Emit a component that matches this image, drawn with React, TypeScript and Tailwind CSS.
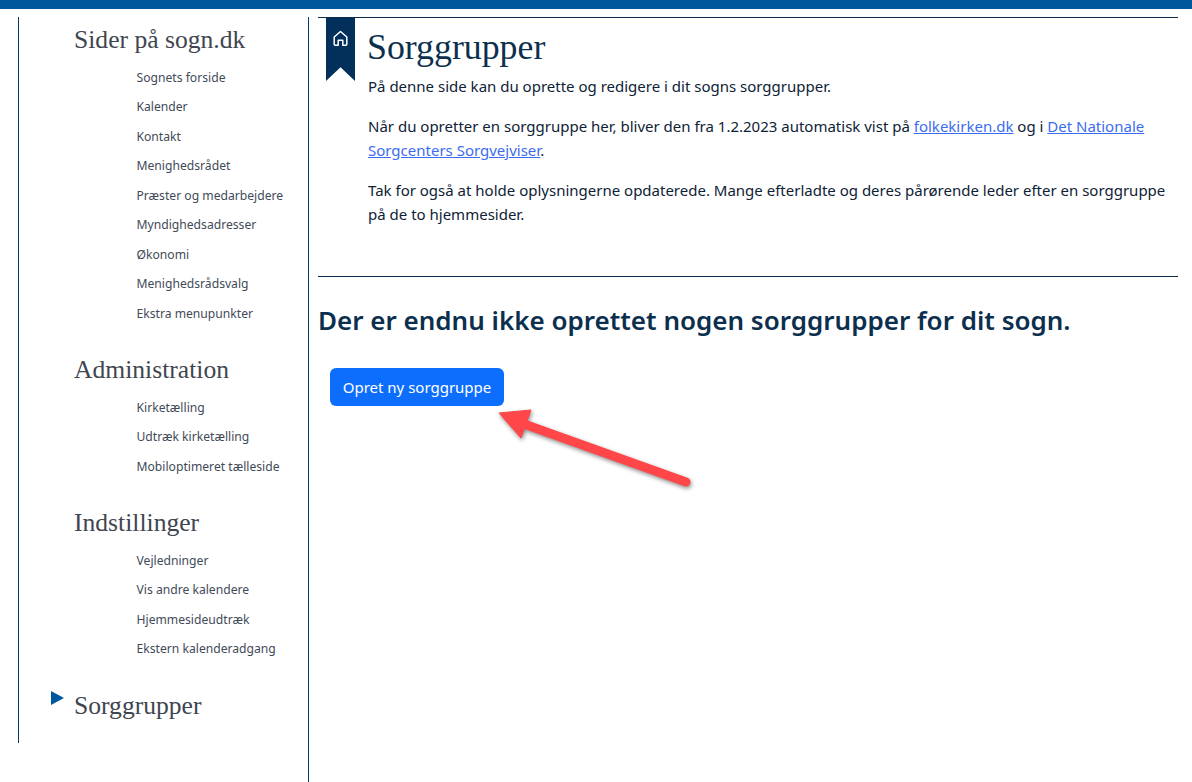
const groups = [
  { title: "Sider på sogn.dk", items: ["Sognets forside", "Kalender", "Kontakt", "Menighedsrådet", "Præster og medarbejdere", "Myndighedsadresser", "Økonomi", "Menighedsrådsvalg", "Ekstra menupunkter"] },
  { title: "Administration", items: ["Kirketælling", "Udtræk kirketælling", "Mobiloptimeret tælleside"] },
  { title: "Indstillinger", items: ["Vejledninger", "Vis andre kalendere", "Hjemmesideudtræk", "Ekstern kalenderadgang"] },
];
const serif = "font-['Liberation_Serif',serif]";
const sans = "font-['Noto_Sans',sans-serif]";

export default function App() {
  return (
    <div className={`w-[1192px] h-[782px] overflow-hidden bg-white ${sans}`}>
      <div className="h-[9px] bg-[#00589c]" />
      <div className="flex pt-2 h-[773px]">
        <div className="ml-[18px] w-[291px] border-r border-[#053d66] h-full">
          <nav className="h-[726px] border-l border-[#053d66] pl-[55px] pt-[8.5px]">
            {groups.map((g) => (
              <section key={g.title} className="mb-[27.5px]">
                <h2 className={`text-[25.6px] leading-[28px] text-[#3f4650] ${serif}`}>{g.title}</h2>
                <ul className="pl-[62.5px] mt-[9px]">
                  {g.items.map((i) => (
                    <li key={i} className="h-[29.5px] leading-[29.5px] text-[12.15px] text-[#3f4a58] whitespace-nowrap">{i}</li>
                  ))}
                </ul>
              </section>
            ))}
            <div className="relative mt-[28.5px]">
              <span className="absolute left-[-23px] top-[-1px] w-0 h-0 border-y-[7px] border-y-transparent border-l-[13px] border-l-[#00589c]" />
              <h2 className={`text-[25.6px] leading-[28px] text-[#3f4650] ${serif}`}>Sorggrupper</h2>
            </div>
          </nav>
        </div>
        <main className="ml-[9px] w-[860px]">
          <div className="border-t border-[#0b2f4f] border-b h-[260px] flex">
            <div className="relative ml-2 w-[29px] shrink-0 h-[63px] bg-[#03305a] [clip-path:polygon(0_0,100%_0,100%_100%,50%_78%,0_100%)]">
              <svg className="absolute left-[7px] top-[12px]" width="15" height="17" viewBox="0 0 15 17" fill="none" stroke="#fff" strokeWidth="1.5" strokeLinejoin="round">
                <path d="M1.2 7 7.5 1.5 13.8 7v7.2q0 1-1 1H9.8v-5H5.2v5H2.2q-1 0-1-1Z" />
              </svg>
            </div>
            <div className="ml-[13px] flex-1 text-[#0e2236] text-[15px] leading-[24px]">
              <h1 className={`text-[35.8px] leading-[40px] mt-[9px] -ml-px text-[#0c2f4e] ${serif}`}>Sorggrupper</h1>
              <p className="mt-[7px]">På denne side kan du oprette og redigere i dit sogns sorggrupper.</p>
              <p className="mt-4">Når du opretter en sorggruppe her, bliver den fra 1.2.2023 automatisk vist på <a className="text-[#3b6cf0] underline">folkekirken.dk</a> og i <a className="text-[#3b6cf0] underline">Det Nationale Sorgcenters Sorgvejviser</a>.</p>
              <p className="mt-4">Tak for også at holde oplysningerne opdaterede. Mange efterladte og deres pårørende leder efter en sorggruppe på de to hjemmesider.</p>
            </div>
          </div>
          <h3 className="mt-[25px] text-[26px] leading-[36px] font-semibold text-[#0c2f4e] whitespace-nowrap">Der er endnu ikke oprettet nogen sorggrupper for dit sogn.</h3>
          <div className="relative">
            <button className="ml-3 mt-[30px] w-[174px] h-[38px] rounded-md bg-[#0d6efd] text-white text-[15px]">Opret ny sorggruppe</button>
            <svg className="absolute left-[170px] top-[60px] drop-shadow-[1px_2px_2px_rgba(0,0,0,0.45)]" width="210" height="100" viewBox="0 0 210 100" fill="none">
              <path d="M198 84 36 26" stroke="#ff4649" strokeWidth="9" strokeLinecap="round" />
              <path d="M11 15 43 12 33 40Z" fill="#ff4649" stroke="#ff4649" strokeLinejoin="round" />
            </svg>
          </div>
        </main>
      </div>
    </div>
  );
}
